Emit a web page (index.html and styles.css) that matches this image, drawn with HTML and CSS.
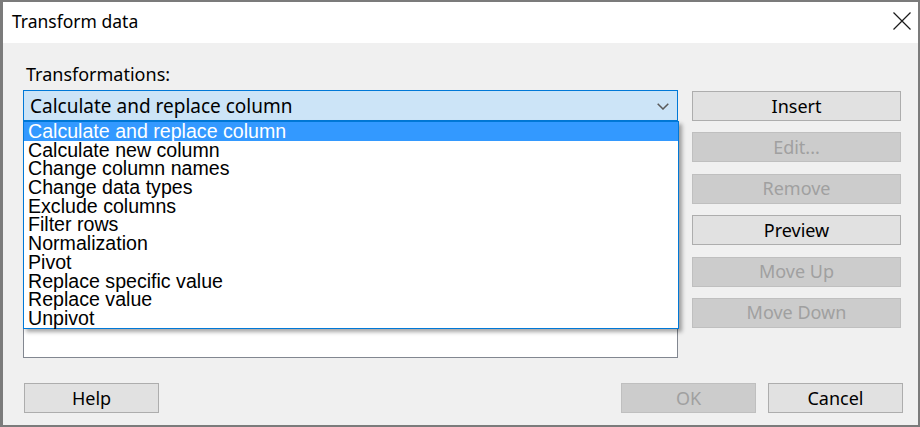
FILE: index.html
```html
<!DOCTYPE html>
<html>
<head>
<meta charset="utf-8">
<title>Transform data</title>
<link rel="stylesheet" href="styles.css">
</head>
<body>
<div class="window">
  <div class="titlebar">
    <span class="title">Transform data</span>
    <span class="close" aria-label="Close">
      <svg width="18" height="18" viewBox="0 0 18 18"><path d="M0.5 0.5 L17.5 17.5 M17.5 0.5 L0.5 17.5" stroke="#1a1a1a" stroke-width="1.2" fill="none"/></svg>
    </span>
  </div>
  <div class="content">
    <div class="main">
      <div class="left">
        <div class="label">Transformations:</div>
        <div class="combo">
          <span class="combo-text">Calculate and replace column</span>
          <svg class="chev" width="12" height="7" viewBox="0 0 12 7"><path d="M0.7 0.7 L6 6 L11.3 0.7" stroke="#5a5a5a" stroke-width="1.5" fill="none"/></svg>
        </div>
        <div class="listbox"></div>
        <ul class="dropdown">
          <li class="sel">Calculate and replace column</li>
          <li>Calculate new column</li>
          <li>Change column names</li>
          <li>Change data types</li>
          <li>Exclude columns</li>
          <li>Filter rows</li>
          <li>Normalization</li>
          <li>Pivot</li>
          <li>Replace specific value</li>
          <li>Replace value</li>
          <li>Unpivot</li>
        </ul>
      </div>
      <div class="right">
        <button class="btn">Insert</button>
        <button class="btn disabled">Edit...</button>
        <button class="btn disabled">Remove</button>
        <button class="btn">Preview</button>
        <button class="btn disabled">Move Up</button>
        <button class="btn disabled">Move Down</button>
      </div>
    </div>
    <div class="bottom">
      <button class="btn small">Help</button>
      <span class="spacer"></span>
      <button class="btn small disabled">OK</button>
      <button class="btn small">Cancel</button>
    </div>
  </div>
</div>
</body>
</html>
```
FILE: styles.css
```css
html, body {
  margin: 0;
  padding: 0;
  background: #f0f0f0;
}
.window {
  width: 920px;
  height: 427px;
  box-sizing: border-box;
  border: 2px solid #7b7b7b;
  border-left-width: 3px;
  background: #f0f0f0;
  font-family: "Noto Sans", "Open Sans", sans-serif;
  color: #000;
  overflow: hidden;
}
.titlebar {
  height: 41px;
  background: #fff;
  display: flex;
  align-items: center;
  padding-left: 9px;
  padding-right: 7px;
}
.title {
  font-size: 17.5px;
  line-height: 20px;
  margin-top: -4px;
}
.close {
  margin-left: auto;
  width: 18px;
  height: 18px;
  margin-top: -3px;
  display: flex;
}
.content {
  padding: 20px 0 0 20px;
}
.main {
  display: grid;
  grid-template-columns: 655px 209px;
  column-gap: 14px;
}
.left {
  position: relative;
}
.label {
  font-size: 18px;
  line-height: 22px;
  height: 22px;
  margin-bottom: 5px;
  padding-left: 3px;
}
.combo {
  height: 31px;
  box-sizing: border-box;
  border: 1px solid #0078d7;
  background: #cce4f7;
  display: flex;
  align-items: center;
  padding-left: 6px;
  padding-right: 8px;
}
.combo-text {
  font-size: 19px;
  line-height: 24px;
}
.chev {
  margin-left: auto;
  margin-top: 2px;
}
.listbox {
  margin-top: 7px;
  height: 230px;
  box-sizing: border-box;
  border: 1px solid #828790;
  background: #fff;
}
.dropdown {
  position: absolute;
  left: 0;
  top: 58px;
  width: 656px;
  box-sizing: border-box;
  margin: 0;
  padding: 0;
  list-style: none;
  background: #fff;
  border: 1px solid #0078d7;
  box-shadow: 3px 3px 4px rgba(0, 0, 0, 0.35);
  font-family: "Liberation Sans", Arial, sans-serif;
  font-size: 19.6px;
  line-height: 18.7px;
}
.dropdown li {
  padding-left: 4px;
  height: 18.7px;
  white-space: nowrap;
}
.dropdown li.sel {
  background: #3399ff;
  color: #fff;
}
.right {
  display: flex;
  flex-direction: column;
  gap: 11.4px;
  padding-top: 28px;
}
.btn {
  height: 30px;
  box-sizing: border-box;
  border: 1px solid #adadad;
  background: #e1e1e1;
  font-family: "Noto Sans", "Open Sans", sans-serif;
  font-size: 18px;
  line-height: 26px;
  color: #000;
  padding: 0 0 1px;
  margin: 0;
  text-align: center;
}
.btn.disabled {
  background: #cccccc;
  border-color: #bfbfbf;
  color: #a0a0a0;
}
.bottom {
  display: flex;
  margin-top: 25px;
  padding-left: 1px;
  gap: 12px;
}
.btn.small {
  width: 135px;
}
.spacer {
  flex: 1;
  max-width: 438px;
}
```
